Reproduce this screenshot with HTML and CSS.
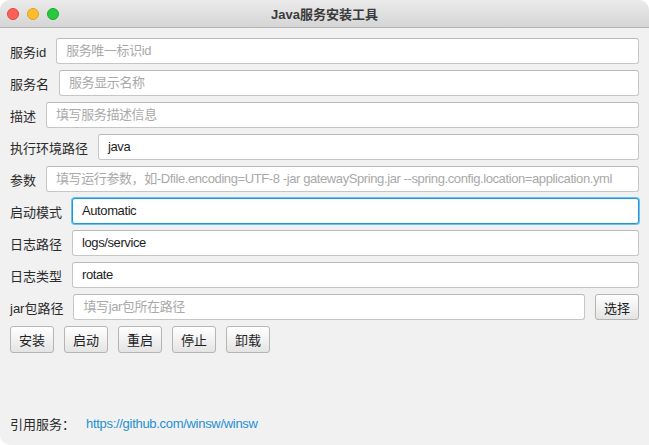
FILE: index.html
```html
<!DOCTYPE html>
<html lang="zh">
<head>
<meta charset="utf-8">
<title>Java服务安装工具</title>
<link rel="stylesheet" href="styles.css">
</head>
<body>
<div class="window">
  <div class="titlebar">
    <div class="lights">
      <span class="light red"></span>
      <span class="light yellow"></span>
      <span class="light green"></span>
    </div>
    <div class="title">Java服务安装工具</div>
  </div>
  <div class="content">
    <div class="form">
      <div class="row"><span class="label">服务id</span><div class="field placeholder">服务唯一标识id</div></div>
      <div class="row"><span class="label">服务名</span><div class="field placeholder">服务显示名称</div></div>
      <div class="row"><span class="label">描述</span><div class="field placeholder">填写服务描述信息</div></div>
      <div class="row"><span class="label">执行环境路径</span><div class="field">java</div></div>
      <div class="row"><span class="label">参数</span><div class="field placeholder">填写运行参数，如-Dfile.encoding=UTF-8 -jar gatewaySpring.jar --spring.config.location=application.yml</div></div>
      <div class="row"><span class="label">启动模式</span><div class="field focused">Automatic</div></div>
      <div class="row"><span class="label">日志路径</span><div class="field">logs/service</div></div>
      <div class="row"><span class="label">日志类型</span><div class="field">rotate</div></div>
      <div class="row"><span class="label">jar包路径</span><div class="field placeholder">填写jar包所在路径</div><button class="btn btn-choose">选择</button></div>
    </div>
    <div class="actions">
      <button class="btn">安装</button>
      <button class="btn">启动</button>
      <button class="btn">重启</button>
      <button class="btn">停止</button>
      <button class="btn">卸载</button>
    </div>
    <div class="footer">
      <span class="footer-label">引用服务：</span>
      <a class="link" href="#">https://github.com/winsw/winsw</a>
    </div>
  </div>
</div>
</body>
</html>
```

FILE: styles.css
```css
* { box-sizing: border-box; }
html, body {
  margin: 0;
  padding: 0;
  background: #ffffff;
}
body {
  font-family: "Liberation Sans", "Noto Sans CJK SC", sans-serif;
  font-size: 13px;
  color: #222;
}
.window {
  width: 649px;
  height: 445px;
  background: #f1f1f1;
  border-radius: 10px 10px 0 10px;
  overflow: hidden;
  display: flex;
  flex-direction: column;
}
.titlebar {
  position: relative;
  height: 28px;
  flex: none;
  background: linear-gradient(#ebebeb, #d5d5d5);
  border-bottom: 1px solid #b3b3b3;
  display: flex;
  align-items: center;
  justify-content: center;
}
.lights {
  position: absolute;
  left: 7px;
  top: 8px;
  display: flex;
  gap: 8px;
}
.light {
  width: 12px;
  height: 12px;
  border-radius: 50%;
  display: block;
}
.red { background: #fe5f57; border: 1px solid #e0443e; }
.yellow { background: #febc2e; border: 1px solid #dea123; }
.green { background: #28c840; border: 1px solid #1aab29; }
.title {
  font-weight: bold;
  font-size: 13px;
  color: #3a3a3a;
}
.content {
  flex: 1;
  display: flex;
  flex-direction: column;
  padding: 10px 10px 13px 10px;
}
.form {
  display: flex;
  flex-direction: column;
  gap: 6px;
}
.row {
  display: flex;
  align-items: center;
  height: 26px;
  gap: 10px;
}
.label {
  color: #2b2b2b;
  white-space: nowrap;
  flex: none;
}
.field {
  flex: 1;
  height: 26px;
  line-height: 24px;
  padding: 0 9px;
  background: #fff;
  border: 1px solid #c6c6c6;
  border-top-color: #b9b9b9;
  border-radius: 3px;
  white-space: nowrap;
  overflow: hidden;
  color: #1e1e1e;
  min-width: 0;
  letter-spacing: -0.4px;
}
.field.placeholder { color: #a9a9a9; }
.field.focused {
  border-color: #1b9ad9;
  box-shadow: 0 0 0 1px #6cc0ee;
}
.btn {
  font-family: "Liberation Sans", "Noto Sans CJK SC", sans-serif;
  font-size: 13px;
  color: #222;
  height: 27px;
  width: 44px;
  padding: 0;
  border: 1px solid #b5b5b5;
  border-radius: 3px;
  background: linear-gradient(#ffffff, #e4e4e4);
  flex: none;
}
.btn-choose {
  height: 26px;
}
.actions {
  display: flex;
  gap: 10px;
  margin-top: 6px;
}
.footer {
  margin-top: auto;
  display: flex;
  align-items: center;
  height: 18px;
}
.footer-label {
  color: #2b2b2b;
  width: 76px;
}
.link {
  color: #1f8fd3;
  text-decoration: none;
  letter-spacing: -0.3px;
}
```
